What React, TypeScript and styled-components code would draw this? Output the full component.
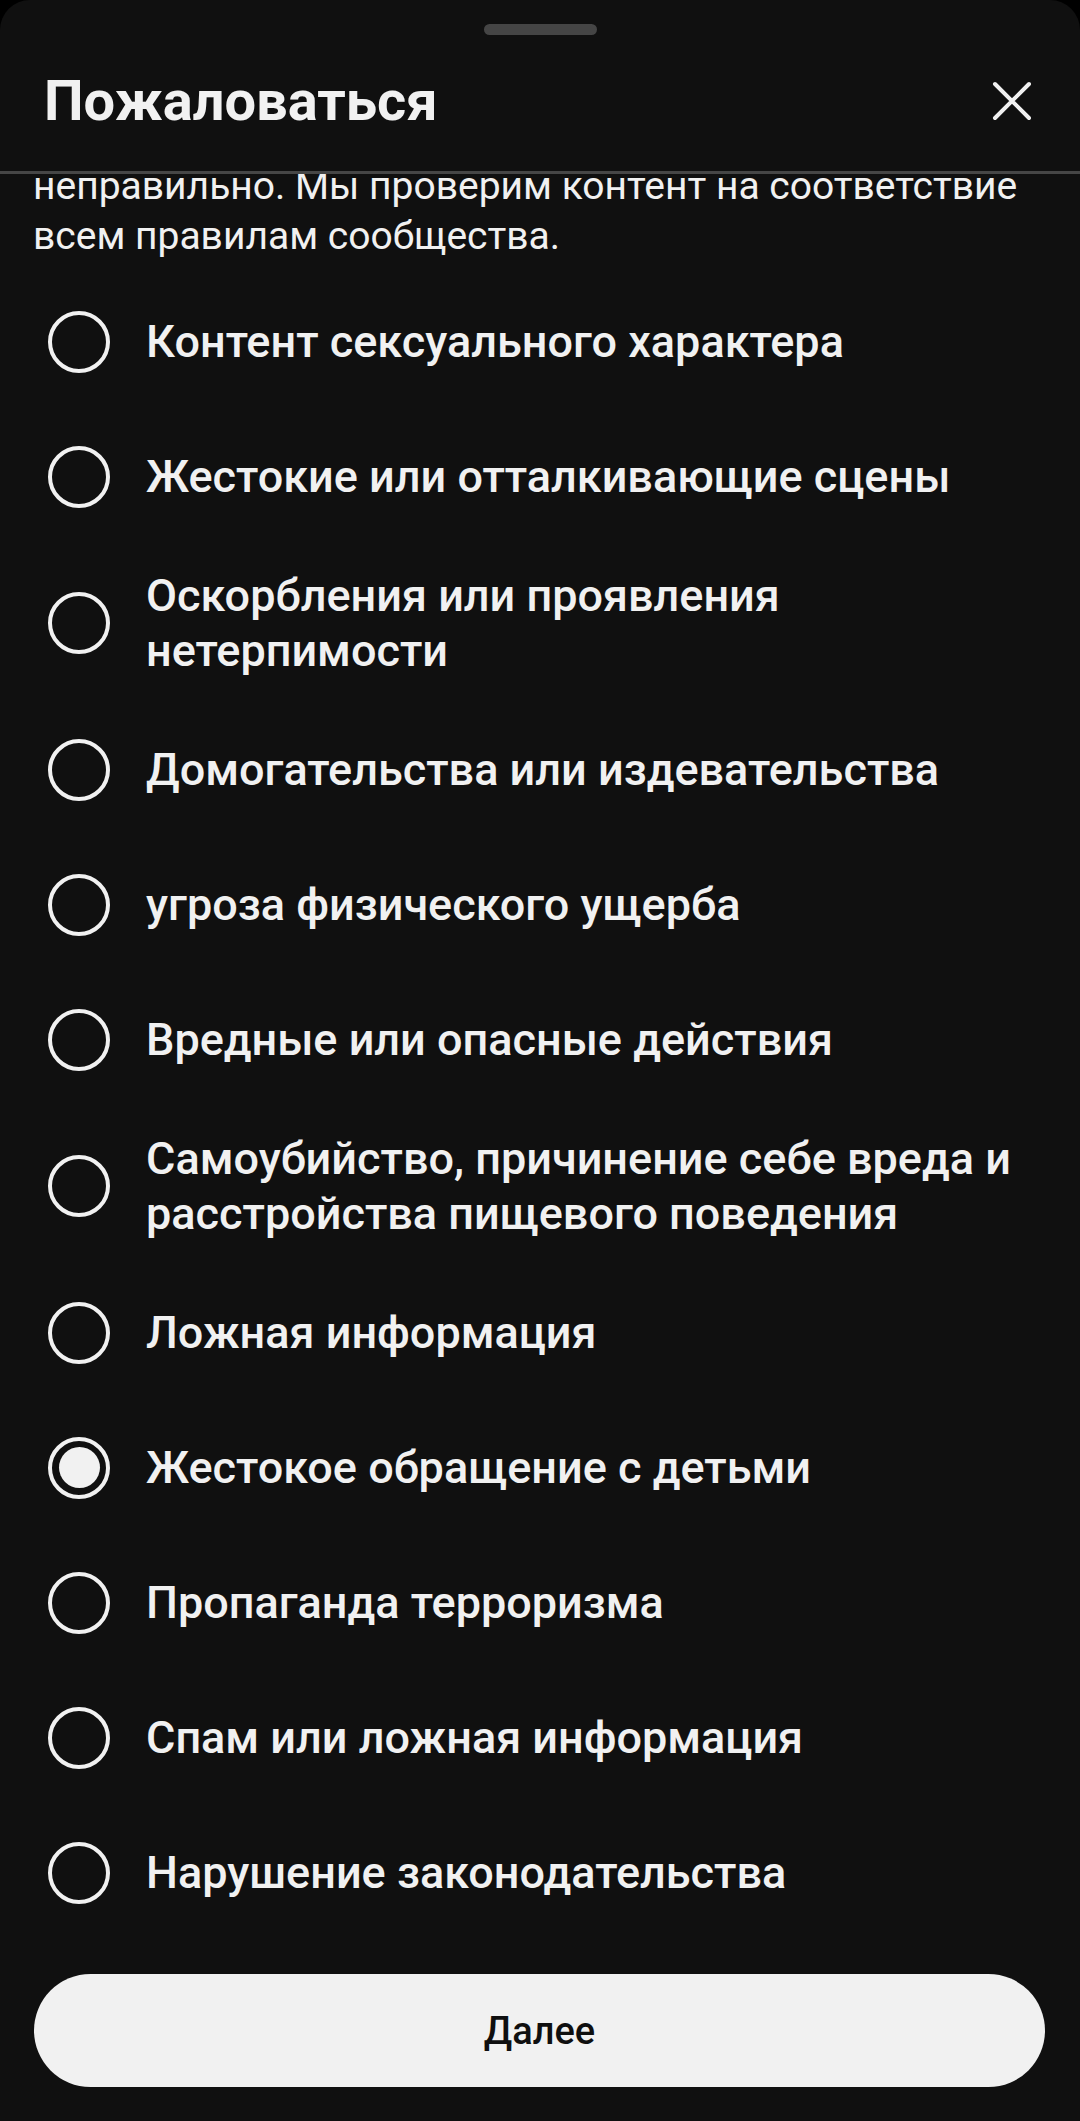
import React, { useState } from "react";
import styled, { createGlobalStyle } from "styled-components";

const Global = createGlobalStyle`
  html, body { margin: 0; padding: 0; background: #000; }
  body { font-family: Roboto, "Noto Sans", "Liberation Sans", sans-serif; -webkit-font-smoothing: antialiased; }
  * { box-sizing: border-box; }
`;

const Sheet = styled.div`
  width: 1080px;
  height: 2121px;
  background: #101010;
  border-radius: 30px 30px 0 0;
  display: flex;
  flex-direction: column;
  overflow: hidden;
  color: #f1f1f1;
`;

const Header = styled.header`
  flex: none;
  display: flex;
  flex-direction: column;
  align-items: center;
  padding-top: 24px;
  border-bottom: 3px solid #464646;
`;

const Handle = styled.div`
  width: 113px;
  height: 11px;
  border-radius: 6px;
  background: #454545;
`;

const TitleRow = styled.div`
  align-self: stretch;
  height: 136px;
  display: flex;
  align-items: center;
  justify-content: space-between;
  padding: 0 48px 4px 44px;
`;

const Title = styled.h1`
  margin: 0;
  font-size: 56px;
  font-weight: 700;
  letter-spacing: 0;
  color: #f1f1f1;
`;

const CloseButton = styled.button`
  background: none;
  border: 0;
  padding: 0;
  width: 40px;
  height: 40px;
  display: flex;
  color: #f1f1f1;
`;

const Scroll = styled.div`
  flex: 1;
  min-height: 0;
  overflow: hidden;
`;

const Description = styled.p`
  margin: -13px 0 0;
  padding: 0 30px 0 33px;
  font-size: 39px;
  line-height: 50px;
  font-weight: 400;
  color: #f1f1f1;
`;

const List = styled.div`
  margin-top: 13px;
  display: flex;
  flex-direction: column;
`;

const Row = styled.label`
  min-height: 135px;
  padding: 24px 35px 24px 48px;
  display: flex;
  align-items: center;
  gap: 36px;
  cursor: pointer;
`;

const Radio = styled.span<{ $checked: boolean }>`
  flex: none;
  width: 62px;
  height: 62px;
  border-radius: 50%;
  border: 4.5px solid #f1f1f1;
  display: flex;
  align-items: center;
  justify-content: center;
  &::after {
    content: "";
    width: 41px;
    height: 41px;
    border-radius: 50%;
    background: #f1f1f1;
    display: ${(p) => (p.$checked ? "block" : "none")};
  }
`;

const RowText = styled.span`
  font-size: 45px;
  line-height: 55px;
  font-weight: 500;
  color: #f1f1f1;
`;

const Footer = styled.footer`
  flex: none;
  padding: 31px 35px 34px 34px;
`;

const NextButton = styled.button`
  width: 100%;
  height: 113px;
  border: 0;
  border-radius: 57px;
  background: #f1f1f1;
  color: #0f0f0f;
  font-family: Roboto, "Noto Sans", "Liberation Sans", sans-serif;
  font-size: 38px;
  font-weight: 500;
`;

const options = [
  "Контент сексуального характера",
  "Жестокие или отталкивающие сцены",
  "Оскорбления или проявления нетерпимости",
  "Домогательства или издевательства",
  "угроза физического ущерба",
  "Вредные или опасные действия",
  "Самоубийство, причинение себе вреда и расстройства пищевого поведения",
  "Ложная информация",
  "Жестокое обращение с детьми",
  "Пропаганда терроризма",
  "Спам или ложная информация",
  "Нарушение законодательства",
];

export default function App() {
  const [selected, setSelected] = useState(8);
  return (
    <>
      <Global />
      <Sheet>
        <Header>
          <Handle />
          <TitleRow>
            <Title>Пожаловаться</Title>
            <CloseButton aria-label="Закрыть">
              <svg width="40" height="40" viewBox="0 0 40 40" fill="none">
                <path d="M3 3L37 37M37 3L3 37" stroke="currentColor" strokeWidth="4" strokeLinecap="round" />
              </svg>
            </CloseButton>
          </TitleRow>
        </Header>
        <Scroll>
          <Description>
            неправильно. Мы проверим контент на соответствие всем правилам сообщества.
          </Description>
          <List>
            {options.map((o, i) => (
              <Row key={o} onClick={() => setSelected(i)}>
                <Radio $checked={i === selected} />
                <RowText>{o}</RowText>
              </Row>
            ))}
          </List>
        </Scroll>
        <Footer>
          <NextButton>Далее</NextButton>
        </Footer>
      </Sheet>
    </>
  );
}
